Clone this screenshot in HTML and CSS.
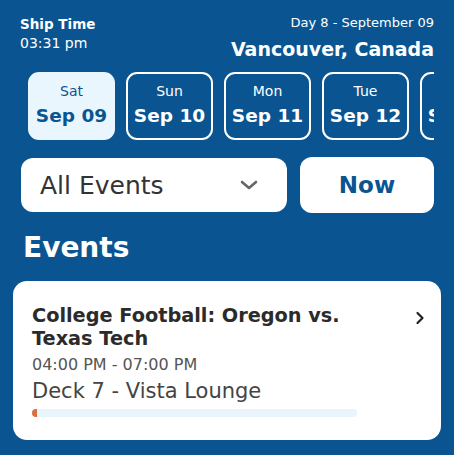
FILE: index.html
```html
<!DOCTYPE html>
<html lang="en">
<head>
  <meta charset="UTF-8" />
  <meta name="viewport" content="width=device-width, initial-scale=1" />
  <title>Events</title>
  <link rel="stylesheet" href="styles.css">
</head>
<body>

<div class="app">
  <!-- Header -->
  <header class="top">
    <div class="ship-time">
      <div class="label">Ship Time</div>
      <div class="clock">03:31 pm</div>
    </div>
    <div class="voyage">
      <div class="day">Day 8 - September 09</div>
      <div class="port">Vancouver, Canada</div>
    </div>
  </header>

  <!-- Dates -->
  <div class="dates">
    <div class="chip active"><span class="dow">Sat</span><span class="dm">Sep 09</span></div>
    <div class="chip"><span class="dow">Sun</span><span class="dm">Sep 10</span></div>
    <div class="chip"><span class="dow">Mon</span><span class="dm">Sep 11</span></div>
    <div class="chip"><span class="dow">Tue</span><span class="dm">Sep 12</span></div>
    <div class="chip"><span class="dow">Wed</span><span class="dm">Sep 13</span></div>
  </div>

  <!-- Filter -->
  <div class="filters">
    <button class="select">
      <span>All Events</span>
      <svg width="18" height="10" viewBox="0 0 18 10"><path d="M2 2 L9 8 L16 2" fill="none" stroke="#666" stroke-width="2.6" stroke-linecap="round" stroke-linejoin="round"/></svg>
    </button>
    <button class="now">Now</button>
  </div>

  <h2 class="title">Events</h2>

  <div class="card">
    <div class="card-body">
      <div class="event-name">College Football: Oregon vs. Texas Tech</div>
      <div class="event-time">04:00 PM - 07:00 PM</div>
      <div class="event-place">Deck 7 - Vista Lounge</div>
      <div class="progress"><div class="fill" style="width: 1.5%"></div></div>
    </div>
    <svg class="arrow" width="10" height="14" viewBox="0 0 10 14"><path d="M2.5 2 L7.5 7 L2.5 12" fill="none" stroke="#222" stroke-width="2.2" stroke-linecap="round" stroke-linejoin="round"/></svg>
  </div>
</div>

</body>
</html>
```

FILE: styles.css
```css
:root {
  --blue: #0a5591;
  --chip-light: #eaf6fd;
  --text: #2b2b2b;
  --muted: #555;
}

* {
  box-sizing: border-box;
}

body {
  margin: 0;
  background: var(--blue);
  font-family: 'DejaVu Sans', sans-serif;
  color: #fff;
}

.app {
  padding: 12px 20px 0 20px;
}

.top {
  display: flex;
  justify-content: space-between;
  align-items: flex-start;
}

.ship-time .label {
  font-size: 13.5px;
  font-weight: 700;
  line-height: 19px;
  margin-top: 3px;
}

.ship-time .clock {
  font-size: 14px;
  line-height: 18px;
}

.voyage {
  text-align: right;
}

.voyage .day {
  font-size: 13px;
  line-height: 16px;
  margin-top: 3px;
}

.voyage .port {
  font-size: 19px;
  font-weight: 700;
  line-height: 24px;
  margin-top: 6px;
}

.dates {
  display: flex;
  gap: 11px;
  margin-top: 11px;
  padding-left: 8px;
  overflow: hidden;
}

.chip {
  flex: 0 0 auto;
  width: 87px;
  height: 68px;
  padding-top: 8px;
  border: 2px solid #fff;
  border-radius: 11px;
  display: flex;
  flex-direction: column;
  align-items: center;
  color: #fff;
}

.chip.active {
  background: var(--chip-light);
  border-color: var(--chip-light);
  color: var(--blue);
}

.chip .dow {
  font-size: 14px;
  line-height: 18px;
}

.chip .dm {
  margin-top: 4px;
  font-size: 18.5px;
  font-weight: 700;
  line-height: 24px;
}

.filters {
  display: flex;
  align-items: center;
  gap: 13px;
  margin-top: 17px;
  padding-left: 1px;
}

button {
  font-family: inherit;
  border: none;
  background: #fff;
  cursor: pointer;
}

.select {
  flex: 0 0 266px;
  height: 54px;
  border-radius: 12px;
  display: flex;
  align-items: center;
  justify-content: space-between;
  padding: 0 29px 0 19px;
  font-size: 25px;
  color: #333;
}

.now {
  flex: 1;
  height: 56px;
  border-radius: 12px;
  font-size: 23px;
  font-weight: 700;
  color: var(--blue);
}

.title {
  margin: 17px 0 0 3px;
  font-size: 28px;
  font-weight: 700;
  line-height: 36px;
}

.card {
  margin: 15px -7px 0 -7px;
  background: #fff;
  border-radius: 14px;
  padding: 23px 16px 23px 19px;
  display: flex;
  align-items: flex-start;
  color: var(--text);
}

.card-body {
  flex: 1;
}

.event-name {
  font-size: 19.3px;
  font-weight: 700;
  line-height: 23px;
  padding-right: 40px;
}

.event-time {
  margin-top: 5px;
  font-size: 16px;
  color: var(--muted);
  line-height: 20px;
}

.event-place {
  margin-top: 3px;
  font-size: 21px;
  color: #444;
  line-height: 26px;
}

.progress {
  margin-top: 5px;
  width: 325px;
  height: 8px;
  background: #eaf4fb;
  border-radius: 4px;
  overflow: hidden;
}

.progress .fill {
  height: 100%;
  background: #d9703f;
}

.arrow {
  margin-top: 7px;
}
```
